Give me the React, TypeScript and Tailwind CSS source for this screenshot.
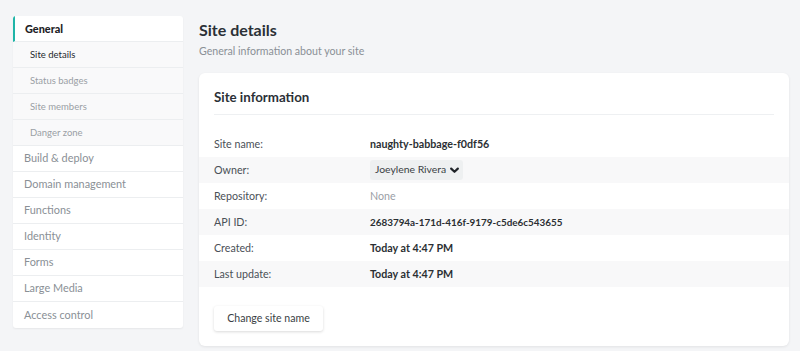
import React from "react";

const sub = ["Site details", "Status badges", "Site members", "Danger zone"];
const top = ["Build & deploy", "Domain management", "Functions", "Identity", "Forms", "Large Media", "Access control"];

const rows: { label: string; value: React.ReactNode; gray: boolean }[] = [
  { label: "Site name:", value: <span className="font-bold text-[#2b2f33]">naughty-babbage-f0df56</span>, gray: false },
  {
    label: "Owner:",
    value: (
      <span className="inline-flex items-center gap-[4px] bg-[#eef0f1] rounded-[3px] h-[20px] pl-[5px] pr-[4px] text-[10.4px] text-[#3a3f44]">
        Joeylene Rivera
        <svg width="9" height="7" viewBox="0 0 10 7"><path d="M1.3 1.4 L5 5 L8.7 1.4" stroke="#1f2328" strokeWidth="2.4" fill="none" strokeLinecap="round" strokeLinejoin="round" /></svg>
      </span>
    ),
    gray: true,
  },
  { label: "Repository:", value: <span className="text-[#9aa0a6]">None</span>, gray: false },
  { label: "API ID:", value: <span className="font-bold text-[#2b2f33] text-[9.9px]">2683794a-171d-416f-9179-c5de6c543655</span>, gray: true },
  { label: "Created:", value: <span className="font-bold text-[#2b2f33]">Today at 4:47 PM</span>, gray: false },
  { label: "Last update:", value: <span className="font-bold text-[#2b2f33]">Today at 4:47 PM</span>, gray: true },
];

export default function App() {
  return (
    <div
      className="w-[800px] h-[351px] bg-[#f4f5f7] flex items-start gap-[16px] pl-[13px] pt-[16px] overflow-hidden text-[10.7px]"
      style={{ fontFamily: 'Lato, "Noto Sans", sans-serif' }}
    >
      <div className="w-[170px] bg-white rounded-[3px] shadow-[0_1px_2px_rgba(0,0,0,0.06)] flex flex-col overflow-hidden">
        <div className="h-[26px] flex items-center pt-[2px] pl-[10px] border-l-2 border-[#20b5a8] border-b border-b-[#eceef0] text-[10.9px] font-black text-[#1d2125]">
          General
        </div>
        {sub.map((s, i) => (
          <div
            key={s}
            className={`h-[26px] flex items-center pt-[1px] pl-[17px] bg-[#f9f9fa] border-b border-[#eceef0] text-[9.5px] ${i === 0 ? "text-[#24292e]" : "text-[#9a9fa5]"}`}
          >
            {s}
          </div>
        ))}
        {top.map((t, i) => (
          <div
            key={t}
            className={`h-[26px] flex items-center pl-[11px] text-[10.9px] text-[#8a9096] ${i < top.length - 1 ? "border-b border-[#eceef0]" : ""}`}
          >
            {t}
          </div>
        ))}
      </div>

      <div className="w-[590px] flex flex-col">
        <div className="text-[16px] font-bold text-[#2b3036] leading-[24px] mt-[2px]">Site details</div>
        <div className="text-[10.6px] text-[#8a9096] leading-[16px] mt-[1px]">General information about your site</div>
        <div className="mt-[14px] bg-white rounded-[6px] shadow-[0_1px_3px_rgba(0,0,0,0.08)] h-[273px] flex flex-col">
          <div className="px-[15px]">
            <div className="pt-[15px] pb-[8px] text-[13.3px] font-bold text-[#2b3036] leading-[18px] border-b border-[#eef0f2]">
              Site information
            </div>
          </div>
          <div className="mt-[16px] flex flex-col">
            {rows.map((r) => (
              <div key={r.label} className={`h-[26px] flex items-center pl-[15px] ${r.gray ? "bg-[#f8f8f9]" : ""}`}>
                <div className="w-[156px] text-[#4a5057]">{r.label}</div>
                <div className="flex items-center">{r.value}</div>
              </div>
            ))}
          </div>
          <div className="px-[15px] mt-[19px]">
            <button className="h-[25px] w-[109px] bg-white rounded-[3px] shadow-[0_1px_3px_rgba(0,0,0,0.15)] text-[10.6px] text-[#3a3f44]">
              Change site name
            </button>
          </div>
        </div>
      </div>
    </div>
  );
}
